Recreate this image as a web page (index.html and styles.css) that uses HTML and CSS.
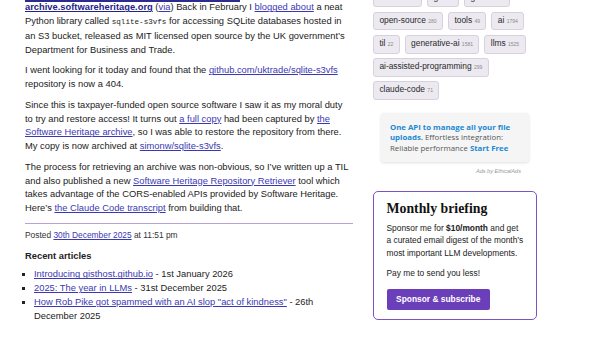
FILE: index.html
```html
<!DOCTYPE html>
<html lang="en">
<head>
<meta charset="utf-8">
<title>sqlite-s3vfs</title>
<link rel="stylesheet" href="styles.css">
</head>
<body>
<div class="page">
  <main class="content">
    <div class="title-underline"></div>
    <p class="first"><strong><a class="title" href="#">archive.softwareheritage.org</a></strong> (<a href="#">via</a>) Back in February I <a href="#">blogged about</a> a neat Python library called <code>sqlite-s3vfs</code> for accessing SQLite databases hosted in an S3 bucket, released as MIT licensed open source by the UK government’s Department for Business and Trade.</p>
    <p>I went looking for it today and found that the <a href="#">github.com/uktrade/sqlite-s3vfs</a> repository is now a 404.</p>
    <p>Since this is taxpayer-funded open source software I saw it as my moral duty to try and restore access! It turns out <a href="#">a full copy</a> had been captured by <a href="#">the Software Heritage archive</a>, so I was able to restore the repository from there. My copy is now archived at <a href="#">simonw/sqlite-s3vfs</a>.</p>
    <p>The process for retrieving an archive was non-obvious, so I’ve written up a TIL and also published a new <a href="#">Software Heritage Repository Retriever</a> tool which takes advantage of the CORS-enabled APIs provided by Software Heritage. Here’s <a href="#">the Claude Code transcript</a> from building that.</p>
    <hr class="divider">
    <div class="posted">Posted <a href="#">30th December 2025</a> at 11:51 pm</div>
    <h3 class="recent-title">Recent articles</h3>
    <ul class="recent">
      <li><a href="#">Introducing gisthost.github.io</a> - 1st January 2026</li>
      <li><a href="#">2025: The year in LLMs</a> - 31st December 2025</li>
      <li><a href="#">How Rob Pike got spammed with an AI slop "act of kindness"</a> - 26th December 2025</li>
    </ul>
  </main>
  <aside class="sidebar">
    <div class="tags">
      <a class="tag" href="#">archives <span class="count">6</span></a>
      <a class="tag" href="#">git <span class="count">118</span></a>
      <a class="tag" href="#">github <span class="count">171</span></a>
      <a class="tag" href="#">open-source <span class="count">280</span></a>
      <a class="tag" href="#">tools <span class="count">49</span></a>
      <a class="tag" href="#">ai <span class="count">1794</span></a>
      <a class="tag" href="#">til <span class="count">22</span></a>
      <a class="tag" href="#">generative-ai <span class="count">1581</span></a>
      <a class="tag" href="#">llms <span class="count">1525</span></a>
      <a class="tag" href="#">ai-assisted-programming <span class="count">299</span></a>
      <a class="tag" href="#">claude-code <span class="count">71</span></a>
    </div>
    <div class="ad">
      <div class="ad-box"><a class="ad-strong" href="#">One API to manage all your file uploads.</a> Effortless integration: Reliable performance <a class="ad-strong" href="#">Start Free</a></div>
      <div class="ad-caption">Ads by EthicalAds</div>
    </div>
    <div class="briefing">
      <h2 class="briefing-title">Monthly briefing</h2>
      <p>Sponsor me for <strong>$10/month</strong> and get a curated email digest of the month’s most important LLM developments.</p>
      <p>Pay me to send you less!</p>
      <a class="btn" href="#">Sponsor &amp; subscribe</a>
    </div>
  </aside>
</div>
</body>
</html>
```
FILE: styles.css
```css
body {
  margin: 0;
  background: #ffffff;
  color: #222222;
  font-family: "Liberation Sans", Arial, Helvetica, sans-serif;
}

a {
  color: #3b38b3;
  text-decoration: underline;
}

.page {
  display: flex;
  align-items: flex-start;
  gap: 20px;
  padding-left: 25px;
}

/* ---------- main column ---------- */
.content {
  width: 328px;
  flex: none;
  font-size: 9.36px;
  line-height: 13.9px;
}

.title-underline {
  width: 215px;
  height: 2px;
  background: #2d2b8e;
}

.content p {
  margin: 0 3px 6.4px 0;
}

.content p.first {
  margin-top: -0.6px;
}

a.title {
  color: #24228a;
}

code {
  font-family: "Liberation Mono", "Courier New", monospace;
  font-size: 7.6px;
}

.divider {
  border: 0;
  height: 1px;
  margin: 0;
  background: #b8a2d6;
}

.posted {
  margin-top: 5px;
  font-size: 8.4px;
  line-height: 12px;
  color: #333333;
}

.recent-title {
  margin: 9.5px 0 0;
  font-size: 9.36px;
  line-height: 13.9px;
  font-weight: bold;
}

.recent {
  margin: 4.4px 0 0;
  padding-left: 9px;
  list-style: square;
}

/* ---------- sidebar ---------- */
.sidebar {
  width: 164px;
  flex: none;
  margin-top: -11.5px;
}

.tags {
  display: flex;
  flex-wrap: wrap;
  gap: 4.5px 5px;
}

.tag {
  display: inline-block;
  padding: 2px 5.4px;
  line-height: 11.7px;
  border: 1px solid #d6d1dd;
  border-radius: 3px;
  background: #ece9f0;
  color: #2a2a2a;
  font-size: 8.4px;
  text-decoration: none;
}

.count {
  font-size: 5px;
  color: #8a8a8a;
}

.ad {
  margin: 13px 8px 0;
}

.ad-box {
  padding: 9px;
  background: #f5f5f5;
  border-radius: 3px;
  box-shadow: 0 1px 3px rgba(0, 0, 0, 0.12);
  font-family: "Open Sans", "Noto Sans", sans-serif;
  font-size: 7.8px;
  line-height: 10.3px;
  color: #555555;
}

.ad-strong {
  color: #2188d2;
  font-weight: bold;
  text-decoration: none;
}

.ad-caption {
  margin-top: 6px;
  padding-right: 8px;
  text-align: right;
  font-style: italic;
  font-size: 5.6px;
  line-height: 7.4px;
  color: #999999;
}

.briefing {
  margin-top: 15.6px;
  padding: 8px 12px 8.5px 12.5px;
  border: 1.5px solid #7d52c2;
  border-radius: 5px;
  font-size: 8.4px;
  line-height: 12.3px;
}

.briefing-title {
  margin: 0;
  font-family: "Liberation Serif", Georgia, serif;
  font-size: 13.8px;
  line-height: 17px;
  font-weight: bold;
  color: #111111;
}

.briefing p {
  margin: 5px 0 0;
}

.briefing p + p {
  margin-top: 8.7px;
}

.btn {
  display: inline-block;
  margin-top: 8.9px;
  padding: 0 9.6px;
  line-height: 21.7px;
  background: #6b3fba;
  border-radius: 2px;
  color: #ffffff;
  font-weight: bold;
  font-size: 8.4px;
  text-decoration: none;
}
```
